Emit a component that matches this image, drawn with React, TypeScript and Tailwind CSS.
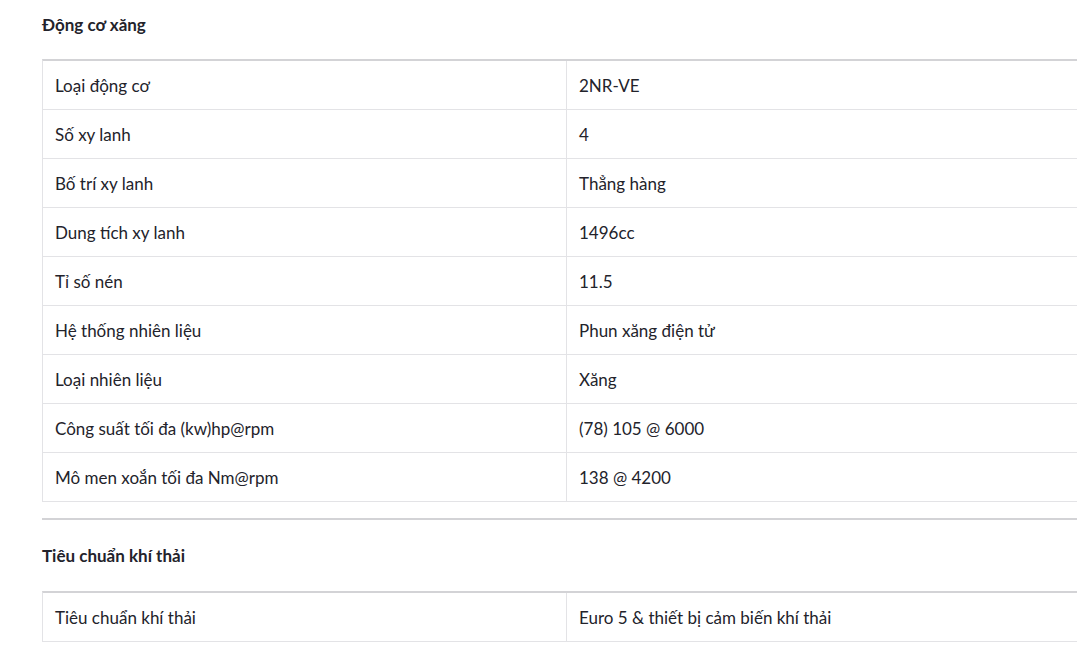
const engineRows = [
  ['Loại động cơ', '2NR-VE'],
  ['Số xy lanh', '4'],
  ['Bố trí xy lanh', 'Thẳng hàng'],
  ['Dung tích xy lanh', '1496cc'],
  ['Tỉ số nén', '11.5'],
  ['Hệ thống nhiên liệu', 'Phun xăng điện tử'],
  ['Loại nhiên liệu', 'Xăng'],
  ['Công suất tối đa (kw)hp@rpm', '(78) 105 @ 6000'],
  ['Mô men xoắn tối đa Nm@rpm', '138 @ 4200'],
];

const emissionRows = [['Tiêu chuẩn khí thải', 'Euro 5 & thiết bị cảm biến khí thải']];

function SpecTable({ rows }: { rows: string[][] }) {
  return (
    <div className="w-[1048px] border-t-2 border-l border-t-[#d3d3d6] border-l-[#e3e3e6]">
      {rows.map(([label, value]) => (
        <div key={label} className="flex h-[49px] border-b border-[#e3e3e6]">
          <div className="w-[524px] flex items-center px-3 pt-[1px] border-r border-[#e3e3e6]">{label}</div>
          <div className="flex-1 flex items-center px-3 pt-[1px]">{value}</div>
        </div>
      ))}
    </div>
  );
}

export default function App() {
  return (
    <div
      className="w-[1077px] h-[647px] overflow-hidden bg-white text-[17px] text-[#23232b]"
      style={{ fontFamily: 'Lato, "Noto Sans", sans-serif' }}
    >
      <div className="pl-[42px] pt-[13px]">
        <h3 className="font-bold leading-6 mb-[22px]">Động cơ xăng</h3>
        <SpecTable rows={engineRows} />
        <div className="mt-[16px] w-[1048px] border-t-2 border-[#d3d3d6]" />
        <h3 className="font-bold leading-6 mt-[24px] mb-[23px]">Tiêu chuẩn khí thải</h3>
        <SpecTable rows={emissionRows} />
      </div>
    </div>
  );
}
